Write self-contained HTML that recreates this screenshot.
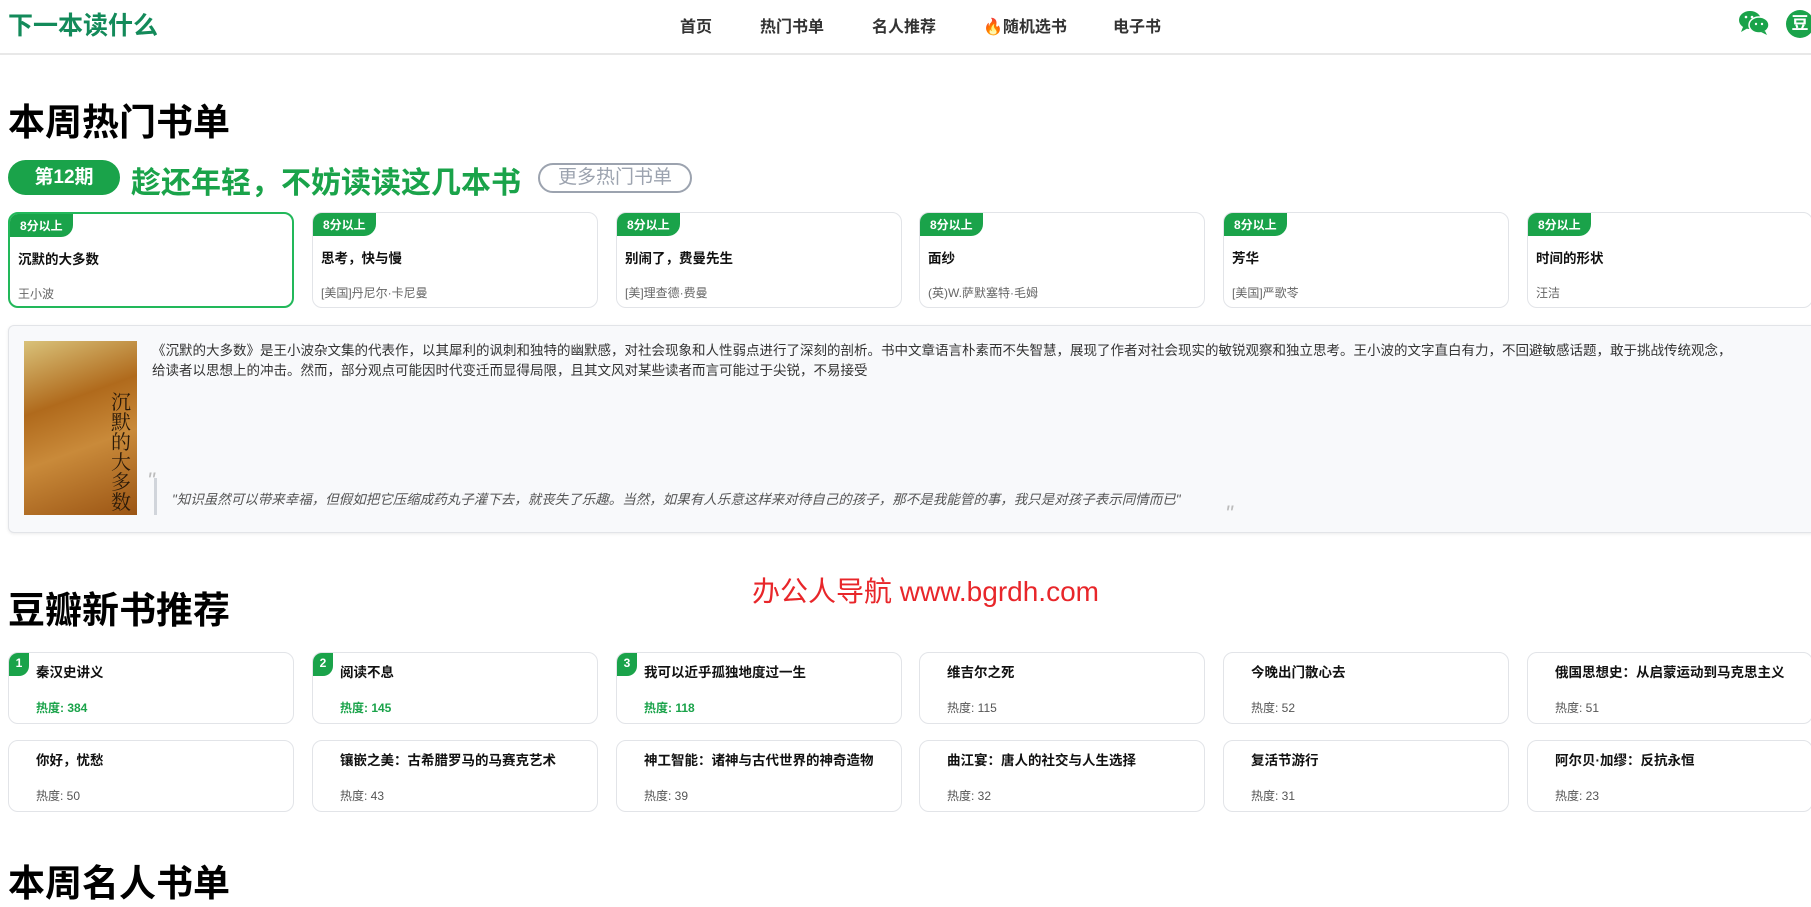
<!DOCTYPE html>
<html><head><meta charset="utf-8"><style>
*{box-sizing:border-box;margin:0;padding:0}
body{width:1811px;height:895px;overflow:hidden;background:#fff;font-family:"Liberation Sans","Noto Sans CJK SC",sans-serif;color:#111;position:relative}
.nav{position:absolute;left:0;top:0;width:1811px;height:55px;border-bottom:2px solid #e8e8e8}
.logo{position:absolute;left:8px;top:6px;font-size:25px;font-weight:bold;color:#138a5a}
.nav a{position:absolute;top:13px;font-size:16px;color:#333;text-decoration:none;font-weight:bold}
.h2{position:absolute;left:8px;font-size:37px;font-weight:bold;color:#000}
.pill{position:absolute;left:8px;top:160px;width:112px;height:35px;border-radius:18px;background:#1aa34a;color:#fff;font-weight:bold;font-size:19px;text-align:center;line-height:35px}
.ttl{position:absolute;left:131px;top:158px;font-size:30px;font-weight:bold;color:#1aa34a}
.more{position:absolute;left:538px;top:163px;width:154px;height:30px;border:2px solid #9ca3af;border-radius:16px;color:#9ca3af;font-size:19px;text-align:center;line-height:26px}
.card{position:absolute;width:286px;border:1px solid #e2e4e8;border-radius:10px;background:#fff;overflow:hidden}
.card.sel{border:2px solid #22b85a}
.badge{position:absolute;left:0;top:0;background:#1aa34a;color:#fff;font-size:12px;font-weight:bold;padding:3px 10px;border-radius:0 0 12px 0}
.bt{position:absolute;left:8px;top:34px;font-size:13.5px;font-weight:bold}
.ba{position:absolute;left:8px;top:71px;font-size:12px;color:#666}
.num{position:absolute;left:0;top:0;width:20px;height:23px;background:#1aa34a;color:#fff;font-size:12px;font-weight:bold;text-align:center;line-height:20px;border-radius:0 0 10px 0}
.nt{position:absolute;left:27px;top:8px;font-size:13.5px;font-weight:bold}
.nh{position:absolute;left:27px;top:46px;font-size:12px;color:#555}
.nh.g{color:#1aa34a;font-weight:bold}
</style></head><body>
<div class="nav">
<div class="logo">下一本读什么</div>
<a style="left:680px">首页</a><a style="left:760px">热门书单</a><a style="left:872px">名人推荐</a><a style="left:983px">🔥随机选书</a><a style="left:1113px">电子书</a>
<svg style="position:absolute;left:1738px;top:11px" width="32" height="24" viewBox="0 0 32 24"><ellipse cx="12" cy="9" rx="11" ry="9" fill="#1aa34a"/><path d="M5 16 L3 21 L10 17Z" fill="#1aa34a"/><ellipse cx="21" cy="14" rx="10" ry="8" fill="#1aa34a" stroke="#fff" stroke-width="1.5"/><path d="M27 20 L29 24 L23 21Z" fill="#1aa34a"/><circle cx="8" cy="6" r="1.3" fill="#fff"/><circle cx="14" cy="6" r="1.3" fill="#fff"/><circle cx="18" cy="13" r="1.2" fill="#fff"/><circle cx="24" cy="13" r="1.2" fill="#fff"/></svg>
<div style="position:absolute;left:1786px;top:10px;width:28px;height:28px;border-radius:50%;background:#1aa34a;color:#fff;font-size:17px;text-align:center;line-height:28px;font-weight:bold">豆</div>
</div>

<div class="h2" style="top:92px">本周热门书单</div>
<div class="pill">第12期</div>
<div class="ttl">趁还年轻，不妨读读这几本书</div>
<div class="more">更多热门书单</div>

<div class="card sel" style="left:8px;top:212px;height:96px"><div class="badge">8分以上</div><div class="bt">沉默的大多数</div><div class="ba">王小波</div></div>
<div class="card" style="left:312px;top:212px;height:96px"><div class="badge">8分以上</div><div class="bt">思考，快与慢</div><div class="ba">[美国]丹尼尔·卡尼曼</div></div>
<div class="card" style="left:616px;top:212px;height:96px"><div class="badge">8分以上</div><div class="bt">别闹了，费曼先生</div><div class="ba">[美]理查德·费曼</div></div>
<div class="card" style="left:919px;top:212px;height:96px"><div class="badge">8分以上</div><div class="bt">面纱</div><div class="ba">(英)W.萨默塞特·毛姆</div></div>
<div class="card" style="left:1223px;top:212px;height:96px"><div class="badge">8分以上</div><div class="bt">芳华</div><div class="ba">[美国]严歌苓</div></div>
<div class="card" style="left:1527px;top:212px;height:96px"><div class="badge">8分以上</div><div class="bt">时间的形状</div><div class="ba">汪洁</div></div>

<div style="position:absolute;left:8px;top:325px;width:1810px;height:208px;background:#f8f9fb;border:1px solid #e2e4e8;border-radius:6px;box-shadow:0 1px 3px rgba(0,0,0,.08)">
<div style="position:absolute;left:15px;top:15px;width:113px;height:174px;background:linear-gradient(160deg,#d9c27a 0%,#b06a1c 35%,#c98a3a 60%,#9b5514 100%)"><div style="position:absolute;right:4px;top:50px;width:22px;font-size:20px;line-height:20px;color:#2a1a0a;font-family:'Noto Serif CJK SC',serif">沉默的大多数</div></div>
<div style="position:absolute;left:143px;top:15px;width:1645px;font-size:13.5px;line-height:20px;color:#333">《沉默的大多数》是王小波杂文集的代表作，以其犀利的讽刺和独特的幽默感，对社会现象和人性弱点进行了深刻的剖析。书中文章语言朴素而不失智慧，展现了作者对社会现实的敏锐观察和独立思考。王小波的文字直白有力，不回避敏感话题，敢于挑战传统观念，<br>给读者以思想上的冲击。然而，部分观点可能因时代变迁而显得局限，且其文风对某些读者而言可能过于尖锐，不易接受</div>
<div style="position:absolute;left:138px;top:142px;font-size:22px;color:#bbb;font-style:italic">"</div>
<div style="position:absolute;left:145px;top:152px;width:3px;height:37px;background:#d1d5db"></div>
<div style="position:absolute;left:163px;top:162px;font-size:13.5px;color:#555;font-style:italic">"知识虽然可以带来幸福，但假如把它压缩成药丸子灌下去，就丧失了乐趣。当然，如果有人乐意这样来对待自己的孩子，那不是我能管的事，我只是对孩子表示同情而已"</div>
<div style="position:absolute;left:1216px;top:175px;font-size:22px;color:#bbb;font-style:italic">"</div>
</div>

<div style="position:absolute;left:752px;top:570px;font-size:28px;color:#e8262a">办公人导航 www.bgrdh.com</div>

<div class="h2" style="top:580px">豆瓣新书推荐</div>

<div class="card" style="left:8px;top:652px;height:72px"><div class="num">1</div><div class="nt">秦汉史讲义</div><div class="nh g">热度: 384</div></div>
<div class="card" style="left:312px;top:652px;height:72px"><div class="num">2</div><div class="nt">阅读不息</div><div class="nh g">热度: 145</div></div>
<div class="card" style="left:616px;top:652px;height:72px"><div class="num">3</div><div class="nt">我可以近乎孤独地度过一生</div><div class="nh g">热度: 118</div></div>
<div class="card" style="left:919px;top:652px;height:72px"><div class="nt">维吉尔之死</div><div class="nh">热度: 115</div></div>
<div class="card" style="left:1223px;top:652px;height:72px"><div class="nt">今晚出门散心去</div><div class="nh">热度: 52</div></div>
<div class="card" style="left:1527px;top:652px;height:72px"><div class="nt">俄国思想史：从启蒙运动到马克思主义</div><div class="nh">热度: 51</div></div>

<div class="card" style="left:8px;top:740px;height:72px"><div class="nt">你好，忧愁</div><div class="nh">热度: 50</div></div>
<div class="card" style="left:312px;top:740px;height:72px"><div class="nt">镶嵌之美：古希腊罗马的马赛克艺术</div><div class="nh">热度: 43</div></div>
<div class="card" style="left:616px;top:740px;height:72px"><div class="nt">神工智能：诸神与古代世界的神奇造物</div><div class="nh">热度: 39</div></div>
<div class="card" style="left:919px;top:740px;height:72px"><div class="nt">曲江宴：唐人的社交与人生选择</div><div class="nh">热度: 32</div></div>
<div class="card" style="left:1223px;top:740px;height:72px"><div class="nt">复活节游行</div><div class="nh">热度: 31</div></div>
<div class="card" style="left:1527px;top:740px;height:72px"><div class="nt">阿尔贝·加缪：反抗永恒</div><div class="nh">热度: 23</div></div>

<div class="h2" style="top:853px">本周名人书单</div>
</body></html>
